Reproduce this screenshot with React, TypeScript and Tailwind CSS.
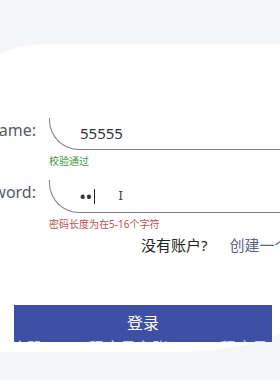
import React from "react";

const font = { fontFamily: '"Noto Sans", "Noto Sans CJK SC", sans-serif' };

export default function App() {
  return (
    <div className="relative w-[280px] h-[380px] overflow-hidden bg-white" style={font}>
      <svg className="absolute inset-0" width="280" height="380" viewBox="0 0 280 380">
        <path d="M0 0 H280 V44 H42 Q16 46 0 54 Z" fill="#f4f6f8" />
        <path d="M0 352 H180 Q240 350 280 334 V380 H0 Z" fill="#f4f6f8" />
      </svg>
      <div className="relative flex flex-col pt-[118px]">
        <div className="flex items-start">
          <div className="w-[36px] flex justify-end shrink-0">
            <span className="whitespace-nowrap text-[16px] text-[#555a66]">Username:</span>
          </div>
          <div className="ml-[13px] flex-1 flex flex-col">
            <div className="h-[32px] border-l border-b border-[#7b7f96] rounded-bl-[30px] pl-[30px] flex items-center text-[15px] text-[#333]">
              55555
            </div>
            <div className="text-[10px] text-[#3c9a3c] mt-[5px] leading-[12px]">校验通过</div>
          </div>
        </div>
        <div className="flex items-start mt-[13px]">
          <div className="w-[36px] flex justify-end shrink-0">
            <span className="whitespace-nowrap text-[16px] text-[#555a66]">Password:</span>
          </div>
          <div className="ml-[13px] flex-1 flex flex-col">
            <div className="h-[33px] border-l border-b border-[#7b7f96] rounded-bl-[30px] pl-[30px] flex items-center text-[14px] text-[#333]">
              <span className="tracking-[1px] font-bold">••</span>
              <span className="w-px h-[15px] bg-[#222] ml-[1px]" />
              <span className="ml-[24px] text-[13px] text-[#444]">I</span>
            </div>
            <div className="text-[10px] text-[#c0504d] mt-[5px] leading-[12px]">密码长度为在5-16个字符</div>
          </div>
        </div>
        <div className="flex mt-[4px] ml-[141px] text-[15px] whitespace-nowrap">
          <span className="text-[#222]">没有账户?</span>
          <span className="ml-[22px] text-[#5a6684]">创建一个账户</span>
        </div>
        <div className="relative mt-[48px] ml-[14px] w-[258px] h-[37px] bg-[#3e50a4] overflow-hidden flex justify-center pt-[8px]">
          <span className="text-[16px] text-white leading-[20px]">登录</span>
          <div className="absolute left-[-4px] top-[33px] flex whitespace-nowrap text-[16px] leading-[20px] text-[#c9cdee]">
            <span>注册</span>
            <span className="ml-[46px]">程序员主账</span>
            <span className="ml-[52px]">程序员</span>
          </div>
        </div>
      </div>
    </div>
  );
}
